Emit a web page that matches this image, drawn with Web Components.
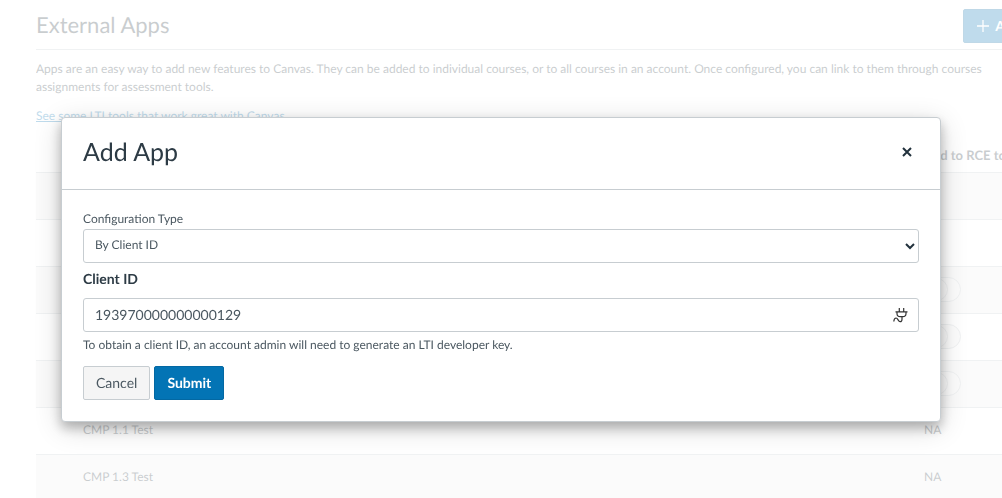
<!DOCTYPE html>
<html lang="en">
<head>
<meta charset="utf-8">
<meta name="viewport" content="width=device-width, initial-scale=1">
<title>External Apps</title>
<style>
  html, body { margin: 0; height: 100%; overflow: hidden; background: #fff; }
  body { font-family: Lato, "Liberation Sans", sans-serif; font-size: 12px; line-height: 18px; color: #2d3b45; text-rendering: geometricPrecision; }
</style>
</head>
<body>
<external-apps-page></external-apps-page>
<app-dialog heading="Add App">
  <select-field label="Configuration Type" value="By Client ID"></select-field>
  <text-field label="Client ID" value="193970000000000129" hint="To obtain a client ID, an account admin will need to generate an LTI developer key."></text-field>
  <app-button slot="footer">Cancel</app-button>
  <app-button slot="footer" kind="primary">Submit</app-button>
</app-dialog>

<script>
const shadow = (host, html) => {
  const t = document.createElement('template');
  t.innerHTML = html;
  host.attachShadow({ mode: 'open' }).append(t.content.cloneNode(true));
};

customElements.define('app-button', class extends HTMLElement {
  connectedCallback() {
    shadow(this, `
      <style>
        :host { display: inline-block; }
        button { box-sizing: border-box; height: 34px; padding: 0 12px; border: 1px solid #c7cdd1; border-radius: 2px;
          background: #f5f5f5; color: #4b5861; font: 14px/20px Lato, sans-serif; text-rendering: inherit; display: flex; align-items: center; gap: 5px; white-space: nowrap; }
        :host([kind=primary]) button { background: #0374b5; border-color: #0368a3; color: #fff; font-weight: 700; }
      </style>
      <button type="button"><slot name="icon"></slot><slot></slot></button>`);
  }
});

customElements.define('toggle-switch', class extends HTMLElement {
  connectedCallback() {
    shadow(this, `
      <style>
        :host { display: block; }
        input { appearance: none; display: block; box-sizing: border-box; margin: 0; width: 37px; height: 25px;
          border: 1px solid #c7cdd1; border-radius: 13px; background: #f5f5f5; }
        input::before { content: ""; display: block; box-sizing: border-box; width: 23px; height: 23px;
          border: 1px solid #c7cdd1; border-radius: 50%; }
      </style>
      <input type="checkbox" aria-label="Add to RCE toolbar">`);
  }
});

customElements.define('external-apps-page', class extends HTMLElement {
  connectedCallback() {
    const rows = [['', ''], ['', ''], ['', 1], ['', 1], ['', 1], ['CMP 1.1 Test', 'NA'], ['CMP 1.3 Test', 'NA']];
    shadow(this, `
      <style>
        :host { display: block; height: 100%; overflow: hidden; }
        main { opacity: .25; margin: 0 -38px 0 36px; }
        header { display: flex; justify-content: space-between; align-items: flex-start; box-sizing: border-box;
          padding: 9px 0 0; height: 50px; border-bottom: 1px solid #c7cdd1; }
        h1 { margin: 0; font-size: 22px; line-height: 32px; font-weight: 400; }
        p { margin: 10px 0 11px; }
        a { color: #0374b5; text-decoration: underline; }
        table { width: 100%; border-collapse: collapse; table-layout: fixed; margin-top: 12px; }
        th, td { padding: 0 0 2px; text-align: left; height: 44px; border-bottom: 1px solid #c7cdd1; white-space: nowrap; }
        th { height: 35px; padding: 0; font-size: 13px; font-weight: 700; }
        th:first-child, td:first-child { padding-left: 47px; }
        th:last-child { width: 116px; }
        tbody tr:nth-child(odd) { background: #f2f2f2; }
      </style>
      <main>
        <header>
          <h1>External Apps</h1>
          <app-button kind="primary"><svg slot="icon" width="14" height="14" viewBox="0 0 14 14" stroke="#fff" stroke-width="1.3"><path d="M7 1v12M1 7h12"/></svg>Apps</app-button>
        </header>
        <p>Apps are an easy way to add new features to Canvas. They can be added to individual courses, or to all courses in an account. Once configured, you can link to them through courses assignments for assessment tools.</p>
        <a href="#">See some LTI tools that work great with Canvas.</a>
        <table>
          <thead><tr><th></th><th>Add to RCE toolbar</th></tr></thead>
          <tbody>${rows.map(([n, s]) => `<tr><td>${n}</td><td>${s === 1 ? '<toggle-switch></toggle-switch>' : s}</td></tr>`).join('')}</tbody>
        </table>
      </main>`);
  }
});

customElements.define('select-field', class extends HTMLElement {
  connectedCallback() {
    shadow(this, `
      <style>
        :host { display: block; }
        label { display: block; line-height: 20px; color: #4b5861; }
        div { display: grid; align-items: center; }
        select, svg { grid-area: 1 / 1; }
        select { appearance: none; box-sizing: border-box; width: 100%; height: 34px; margin: 0; padding: 0 11px 2px;
          border: 1px solid #c7cdd1; border-radius: 3px; background: #fff; color: #4b5861; font: 12px/18px Lato, sans-serif; text-rendering: inherit; }
        svg { justify-self: end; margin-right: 4px; pointer-events: none; }
      </style>
      <label for="s">${this.getAttribute('label')}</label>
      <div>
        <select id="s"><option>${this.getAttribute('value')}</option></select>
        <svg width="10" height="8" viewBox="0 0 10 8" fill="none" stroke="#22323d" stroke-width="2"><path d="M1 2l4 4 4-4"/></svg>
      </div>`);
  }
});

customElements.define('text-field', class extends HTMLElement {
  connectedCallback() {
    shadow(this, `
      <style>
        :host { display: block; }
        label { display: block; padding: 6px 0 9px; font-size: 14px; line-height: 20px; font-weight: 700; }
        div { display: grid; align-items: center; }
        input, svg { grid-area: 1 / 1; }
        input { box-sizing: border-box; width: 100%; height: 34px; margin: 0; padding: 0 36px 2px 11px;
          border: 1px solid #c7cdd1; border-radius: 3px; background: #fff; color: #4b5861; font: 14px/20px Lato, sans-serif; text-rendering: inherit; }
        svg { justify-self: end; margin-right: 11px; }
        p { margin: 4px 0 0; color: #4b5861; }
      </style>
      <label for="t">${this.getAttribute('label')}</label>
      <div>
        <input id="t" type="text" aria-describedby="h" value="${this.getAttribute('value')}">
        <svg width="15" height="16" viewBox="0 0 15 16" fill="none" stroke="#333" stroke-width="1.2" stroke-linejoin="round">
          <path d="M6.3 1v4M10.7 1v4M2.5 4.8h12M4 4.8v1.7c0 2 1.3 3.2 3.2 3.2h2.6c1.900 0 3.2-1.2 3.2-3.2V4.8M9 9.7v2.5c0 1.600-.8 2.500-1.900 2.500-2 0-2-3.700-4-3.700-1.300 0-2.100 1.200-2.300 3.500"/>
        </svg>
      </div>
      <p id="h">${this.getAttribute('hint')}</p>`);
  }
});

customElements.define('app-dialog', class extends HTMLElement {
  connectedCallback() {
    shadow(this, `
      <style>
        :host { position: fixed; inset: 0; display: flex; align-items: flex-start; padding: 117px 61px 0; }
        section { box-sizing: border-box; flex: 1; background: #fff; border: 1px solid #c7cdd1; border-radius: 4px;
          box-shadow: 0 6px 12px rgba(0,0,0,.25), 0 6px 28px rgba(0,0,0,.16); }
        header { display: flex; justify-content: space-between; align-items: center; box-sizing: border-box; height: 72px;
          padding: 0 21px 4px; border-bottom: 1px solid #c7cdd1; }
        h2 { margin: 0; font-size: 25px; line-height: 32px; font-weight: 400; }
        header button { margin: 0; padding: 7px; border: 0; background: none; }
        svg { display: block; }
        .body { padding: 19px 21px 0; }
        footer { display: flex; gap: 4px; padding: 12px 21px 21px; }
      </style>
      <section role="dialog" aria-labelledby="title">
        <header>
          <h2 id="title">${this.getAttribute('heading')}</h2>
          <button type="button" aria-label="Close"><svg width="10" height="10" viewBox="0 0 10 10" stroke="#22323d" stroke-width="2"><path d="M1 1l8 8M9 1L1 9"/></svg></button>
        </header>
        <div class="body"><slot></slot></div>
        <footer><slot name="footer"></slot></footer>
      </section>`);
  }
});
</script>
</body>
</html>
